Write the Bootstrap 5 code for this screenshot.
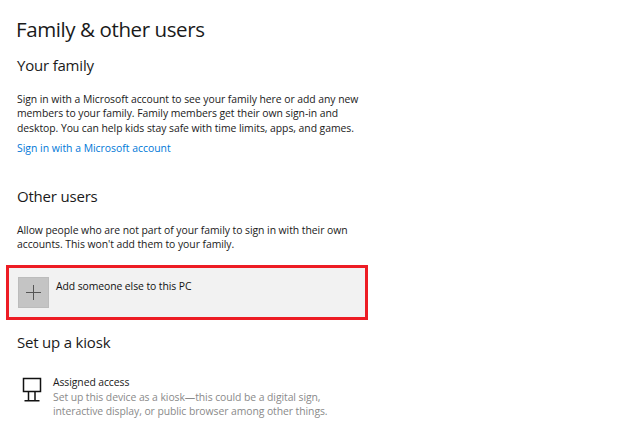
<!DOCTYPE html>
<html>
<head>
    <meta charset="UTF-8">
    <title>Family &amp; other users</title>
    <link href="https://cdn.jsdelivr.net/npm/bootstrap@5.3.3/dist/css/bootstrap.min.css" rel="stylesheet">
    <script src="https://cdn.jsdelivr.net/npm/bootstrap@5.3.3/dist/js/bootstrap.bundle.min.js"></script>
    <style>
        body { font-family: "Open Sans", "Noto Sans", sans-serif; color: #1a1a1a; background: #fff; overflow: hidden; }
        .page-wrap { padding: 15px 0 0 17px; width: 380px; }
        .page-title { font-size: 20.5px; line-height: 28px; font-weight: 400; letter-spacing: -.4px; margin: 0 0 11px -1px; }
        .sect-title { font-size: 15px; line-height: 22px; font-weight: 400; letter-spacing: -.2px; margin: 0; }
        .family-head { margin-bottom: 16px; }
        .other-head { margin-top: 30px; margin-bottom: 16px; }
        .kiosk-head { margin-top: 11px; margin-bottom: 22px; }
        .body-text { font-size: 10.4px; line-height: 14.4px; letter-spacing: -.05px; margin: 0; width: 350px; }
        .family-text { margin-bottom: 5.5px; }
        .other-text { margin-bottom: 13px; }
        .ms-link { font-size: 10.4px; line-height: 14px; color: #0078d7; text-decoration: none; display: block; }
        .add-box { width: 362px; height: 55px; margin-left: -11px; border: 3px solid #ed1c24; background: #f2f2f2; padding: 9px 0 0 9px; gap: 7px; }
        .plus-tile { width: 31px; height: 31px; background: #c4c4c4; border: 1px solid #bcbcbc; }
        .add-label { font-size: 10.4px; line-height: 14px; letter-spacing: -.08px; color: #111; margin-top: 2px; }
        .kiosk-row { gap: 11px; }
        .kiosk-icon { width: 20px; height: 28px; margin: 2px 0 0 5px; }
        .kiosk-name { font-size: 10.4px; line-height: 14px; letter-spacing: -.08px; }
        .kiosk-desc { font-size: 10.4px; line-height: 14.2px; letter-spacing: -.07px; color: #8a8a8a; width: 290px; margin-top: 1px; }
    </style>
</head>
<body>
    <div class="page-wrap">
        <h1 class="page-title">Family &amp; other users</h1>
        <h2 class="sect-title family-head">Your family</h2>
        <p class="body-text family-text">Sign in with a Microsoft account to see your family here or add any new members to your family. Family members get their own sign-in and desktop. You can help kids stay safe with time limits, apps, and games.</p>
        <a href="#" class="ms-link">Sign in with a Microsoft account</a>

        <h2 class="sect-title other-head">Other users</h2>
        <p class="body-text other-text">Allow people who are not part of your family to sign in with their own accounts. This won't add them to your family.</p>

        <div class="add-box d-flex">
            <div class="plus-tile d-flex align-items-center justify-content-center">
                <svg width="15" height="15" viewBox="0 0 15 15"><path d="M7.5 0V15M0 7.5H15" stroke="#555" stroke-width="1" fill="none"/></svg>
            </div>
            <div class="add-label">Add someone else to this PC</div>
        </div>

        <h2 class="sect-title kiosk-head">Set up a kiosk</h2>
        <div class="d-flex kiosk-row">
            <svg class="kiosk-icon flex-shrink-0" viewBox="0 0 20 28"><path d="M1.500 1.500H18.500V14.500H1.500ZM6.500 14.500V23.500M13 14.500V23.500M2.500 23.700H17.500" stroke="#111" stroke-width="1.500" fill="none"/></svg>
            <div>
                <div class="kiosk-name">Assigned access</div>
                <div class="kiosk-desc">Set up this device as a kiosk—this could be a digital sign, interactive display, or public browser among other things.</div>
            </div>
        </div>
    </div>
</body>
</html>
